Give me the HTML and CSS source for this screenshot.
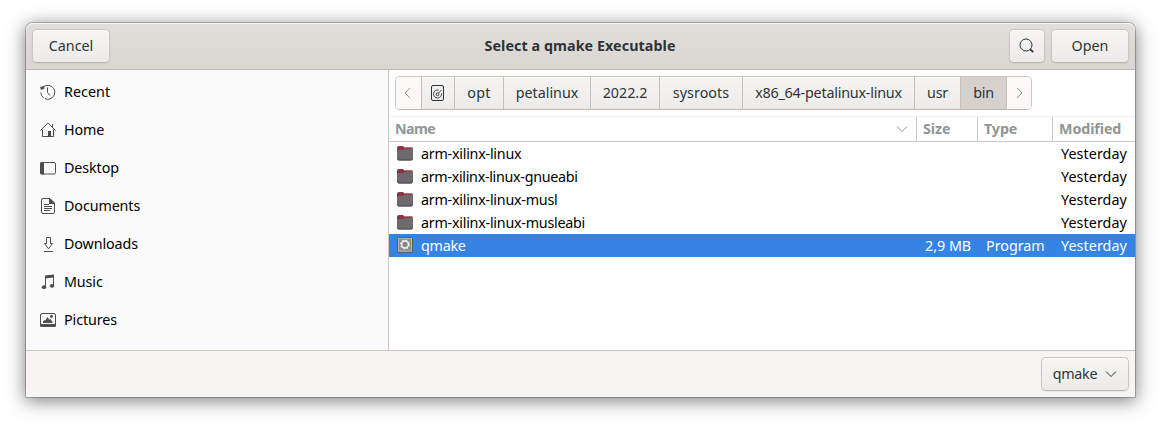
FILE: index.html
```html
<!DOCTYPE html>
<html lang="en">
<head>
<meta charset="utf-8">
<title>Select a qmake Executable</title>
<link rel="stylesheet" href="styles.css">
</head>
<body>
<div class="dialog">
  <header class="headerbar">
    <button class="button cancel">Cancel</button>
    <h1 class="title">Select a qmake Executable</h1>
    <div class="actions">
      <button class="button search" aria-label="Search"><svg class="icon" viewBox="0 0 16 16"><circle cx="7" cy="7" r="6"/><path d="M11.300 11.300l2.900 2.900" stroke-width="1.800"/></svg></button>
      <button class="button open">Open</button>
    </div>
  </header>
  <main class="content">
    <nav class="sidebar">
      <a class="place wide"><svg class="icon" viewBox="0 0 16 16"><path d="M3 3.200A7 7 0 1 1 .8 8.500" stroke-dasharray="30 1 20"/><path class="solid" d="M0 2.500l1.500.5L3.500 1.500 4.500 4.500 1 6z"/><path d="M7.500 3.500v5l2.500 3"/></svg>Recent</a>
      <a class="place"><svg class="icon" viewBox="0 0 16 16"><path d="M.5 8.500L8 .9l7.500 7.600M2.500 7.500v7h11v-7M12.500 2v3"/><path class="solid" d="M8 9h3v5.500H8z"/></svg>Home</a>
      <a class="place"><svg class="icon" viewBox="0 0 16 16"><rect x=".5" y="2.500" width="15" height="11.500" rx="1.500"/><path class="solid" d="M0 4a2 2 0 0 1 2-2h2v12.500H2a2 2 0 0 1-2-2z"/></svg>Desktop</a>
      <a class="place"><svg class="icon" viewBox="0 0 16 16"><path d="M3 .5h7l4.500 4.500v9a1.500 1.500 0 0 1-1.500 1.500H3A1.500 1.500 0 0 1 1.500 14V2A1.500 1.500 0 0 1 3 .5zM4 6.500h5M4 8.500h8M4 10.500h8M4 12.500h6"/><path class="solid" d="M9 1h1.500L14 4.500V6H9z"/></svg>Documents</a>
      <a class="place"><svg class="icon" viewBox="0 0 16 16"><path d="M6.500 1.500h4v6h2L8.500 12.800 4.500 7.500h2zM4 15.500h9"/></svg>Downloads</a>
      <a class="place"><svg class="icon" viewBox="0 0 16 16"><path d="M5.500 13V2.500l8-1V12"/><path class="solid" d="M5 1.500l9-1v3l-9 1z"/><ellipse class="solid" cx="4" cy="13.200" rx="2.200" ry="1.900"/><ellipse class="solid" cx="12" cy="11.800" rx="2.200" ry="1.900"/></svg>Music</a>
      <a class="place"><svg class="icon" viewBox="0 0 16 16"><rect x=".5" y="1.500" width="15" height="12.500" rx="1.500"/><path class="solid" d="M0 12h16v1.500a1.500 1.500 0 0 1-1.500 1.500h-13A1.500 1.500 0 0 1 0 13.500zM3 11V9.500L4.500 8 5.500 8.500 7.500 5l2 3 1-1 2 3v1z"/><circle class="solid" cx="11.500" cy="4.500" r="1.400"/></svg>Pictures</a>
    </nav>
    <section class="browser">
      <div class="pathrow"><div class="pathbar">
        <span class="crumb arrow back"><svg class="icon" viewBox="0 0 16 16"><path d="M10 3L5 8l5 5"/></svg></span>
        <span class="crumb disk"><svg class="icon" viewBox="0 0 16 16"><rect x="1.500" y=".5" width="12" height="15" rx="1.500"/><path d="M8.500 5.100A4 4 0 1 0 11.500 8.500" stroke-width=".9"/><circle cx="7.500" cy="9.200" r="1.400" stroke-width=".9"/><path d="M8.500 8L11.500 5" stroke-width=".9"/></svg></span>
        <span class="crumb c-opt spread">opt</span>
        <span class="crumb c-peta">petalinux</span>
        <span class="crumb c-version">2022.2</span>
        <span class="crumb c-sys wide">sysroots</span>
        <span class="crumb c-arch tight">x86_64-petalinux-linux</span>
        <span class="crumb c-usr tight">usr</span>
        <span class="crumb c-bin tight current">bin</span>
        <span class="crumb arrow forward"><svg class="icon" viewBox="0 0 16 16"><path d="M6 3l5 5-5 5"/></svg></span>
      </div></div>
      <div class="columns heading">
        <span class="cell name">Name<svg class="icon" viewBox="0 0 16 16"><path d="M3 5.500l5 5 5-5"/></svg></span>
        <span class="cell">Size</span>
        <span class="cell">Type</span>
        <span class="cell">Modified</span>
      </div>
      <div class="columns file"><span class="filename"><svg class="fileicon" viewBox="0 0 16 16"><use href="#folder"/></svg>arm-xilinx-linux</span><span></span><span></span><span class="date">Yesterday</span></div>
      <div class="columns file"><span class="filename narrow"><svg class="fileicon" viewBox="0 0 16 16"><use href="#folder"/></svg>arm-xilinx-linux-gnueabi</span><span></span><span></span><span class="date">Yesterday</span></div>
      <div class="columns file"><span class="filename"><svg class="fileicon" viewBox="0 0 16 16"><use href="#folder"/></svg>arm-xilinx-linux-musl</span><span></span><span></span><span class="date">Yesterday</span></div>
      <div class="columns file"><span class="filename"><svg class="fileicon" viewBox="0 0 16 16"><use href="#folder"/></svg>arm-xilinx-linux-musleabi</span><span></span><span></span><span class="date">Yesterday</span></div>
      <div class="columns file selected"><span class="filename"><svg class="fileicon" viewBox="0 0 16 16"><rect x=".5" y=".5" width="15" height="15" rx="1" fill="#8c8c8c" stroke="#5f5f5f"/><rect x="1.500" y="1.500" width="13" height="12.500" fill="none" stroke="#b5b5b5"/><circle cx="8" cy="7.500" r="4.400" fill="none" stroke="#e6e6e6" stroke-width="1.200" stroke-dasharray="1.728 1.728"/><circle cx="8" cy="7.500" r="3.400" fill="#858585" stroke="#f3f3f3" stroke-width="1.500"/></svg>qmake</span><span class="size">2,9 MB</span><span class="type">Program</span><span class="date">Yesterday</span></div>
    </section>
  </main>
  <footer class="footer">
    <button class="button filter">qmake<svg class="icon" viewBox="0 0 16 16"><path d="M3 5.500l5 5 5-5"/></svg></button>
  </footer>
</div>
<svg class="defs" viewBox="0 0 16 16"><defs><g id="folder"><path d="M0 3A2 2 0 0 1 2 1H6l1 1h7a2 2 0 0 1 2 2V8H0z" fill="#8c3345"/><path d="M7 2.500h7.500L15.500 4" stroke="#c07564" fill="none"/><path d="M0 6L1 5h5.200L7.500 3.700H15l1 1V13.500a2 2 0 0 1-2 2H2a2 2 0 0 1-2-2z" fill="#6c6a6c"/><path d="M.5 13.300c0 1 .6 1.700 1.600 1.700h11.800c1 0 1.600-.7 1.600-1.700" fill="none" stroke="#4f4c4f"/></g></defs></svg>
</body>
</html>
```
FILE: styles.css
```css
* { box-sizing: border-box; }
body {
  margin: 0;
  padding: 23px 26px;
  height: 426px;
  overflow: hidden;
  background: #fff;
  color: #000;
  font: 14.3px/20px "Noto Sans", "Open Sans", sans-serif;
}
.dialog {
  display: flex;
  flex-direction: column;
  width: 1109px;
  height: 374px;
  background: #fff;
  border-radius: 7px 7px 0 0;
  box-shadow: 0 0 0 1px rgba(0, 0, 0, .23), 0 3px 18px 1px rgba(0, 0, 0, .5);
}
.icon {
  flex: none;
  width: 16px;
  height: 16px;
  fill: none;
  stroke: currentColor;
}
.solid { fill: currentColor; stroke: none; }
.defs { display: none; }
.headerbar {
  display: grid;
  grid-template-columns: 1fr auto 1fr;
  align-items: center;
  height: 47px;
  padding: 0 6px;
  border-bottom: 1px solid #bfb8b1;
  border-radius: 7px 7px 0 0;
  background: linear-gradient(#e1dedb, #dad6d2);
  box-shadow: inset 0 1px #f6f5f4;
  color: #2e3436;
}
.title {
  margin: 0 1px 0 0;
  font-size: 14.3px;
  font-weight: 700;
  letter-spacing: .07px;
}
.actions { display: flex; justify-content: flex-end; gap: 6px; }
.button {
  display: flex;
  align-items: center;
  justify-content: center;
  width: 78px;
  height: 34px;
  padding: 0;
  border: 1px solid #cdc7c2;
  border-bottom-color: #bfb8b1;
  border-radius: 5px;
  background: linear-gradient(#f6f5f4, #edebe9);
  box-shadow: inset 0 1px #fff, 0 1px 2px rgba(0, 0, 0, .07);
  color: #2e3436;
  font: inherit;
}
.search { width: 36px; }
.content { display: flex; height: 280px; }
.sidebar {
  width: 363px;
  padding-top: 3px;
  border-right: 1px solid #cdc7c2;
  background: #fafafa;
}
.place {
  display: flex;
  align-items: center;
  gap: 8px;
  height: 38px;
  padding: 0 13px 0 14px;
  letter-spacing: -.1px;
}
.place .icon { color: #4d4d4d; }
.browser { flex: 1; }
.pathrow { height: 47px; padding: 6px; border-bottom: 1px solid #f1f0ee; }
.pathbar {
  display: flex;
  width: 637px;
  height: 34px;
  border: 1px solid #cdc7c2;
  border-bottom-color: #bfb8b1;
  border-radius: 5px;
  overflow: hidden;
  color: #2e3436;
}
.crumb {
  display: flex;
  align-items: center;
  justify-content: center;
  border-right: 1px solid #c6c0ba;
  background: linear-gradient(#f6f5f4, #edebe9);
  box-shadow: inset 0 1px #fff;
}
.arrow { width: 26px; background: #faf9f8; color: #929595; box-shadow: none; }
.back { padding-right: 2px; }
.forward { width: 24px; border: 0; }
.disk { width: 33px; }
.c-opt { width: 49px; }
.c-peta { width: 87px; }
.c-version { width: 69px; }
.c-sys { width: 83px; }
.c-arch { width: 172px; }
.c-usr { width: 46px; }
.c-bin { width: 46px; }
.current { background: #d6d1cd; box-shadow: none; }
.wide { letter-spacing: .05px; }
.spread { letter-spacing: .3px; }
.tight { letter-spacing: -.2px; }
.columns {
  display: grid;
  grid-template-columns: 528px 61px 75px 82px;
  align-items: center;
}
.heading {
  height: 25px;
  border-bottom: 1px solid #cdc7c2;
  color: #929595;
  font-weight: 700;
  letter-spacing: -.1px;
}
.cell {
  height: 24px;
  padding-left: 6px;
  border-right: 1px solid #cdc7c2;
  line-height: 24px;
}
.cell:last-child { border: 0; }
.name {
  display: flex;
  align-items: center;
  justify-content: space-between;
  padding-right: 6px;
  letter-spacing: -.6px;
}
.file { height: 23px; }
.filename {
  display: flex;
  align-items: center;
  gap: 8px;
  padding-left: 8px;
  letter-spacing: -.24px;
}
.narrow { letter-spacing: -.3px; }
.fileicon { width: 16px; height: 16px; position: relative; top: -1px; }
.date { padding-left: 8px; letter-spacing: .08px; }
.size { padding-left: 8px; }
.type { padding-left: 8px; }
.selected { background: #3584e4; color: #fff; }
.footer {
  display: flex;
  justify-content: flex-end;
  height: 47px;
  padding: 6px;
  border-top: 1px solid #cdc7c2;
  background: #f6f5f4;
}
.filter { width: 88px; gap: 6px; padding-left: 2px; letter-spacing: -.25px; }
```
